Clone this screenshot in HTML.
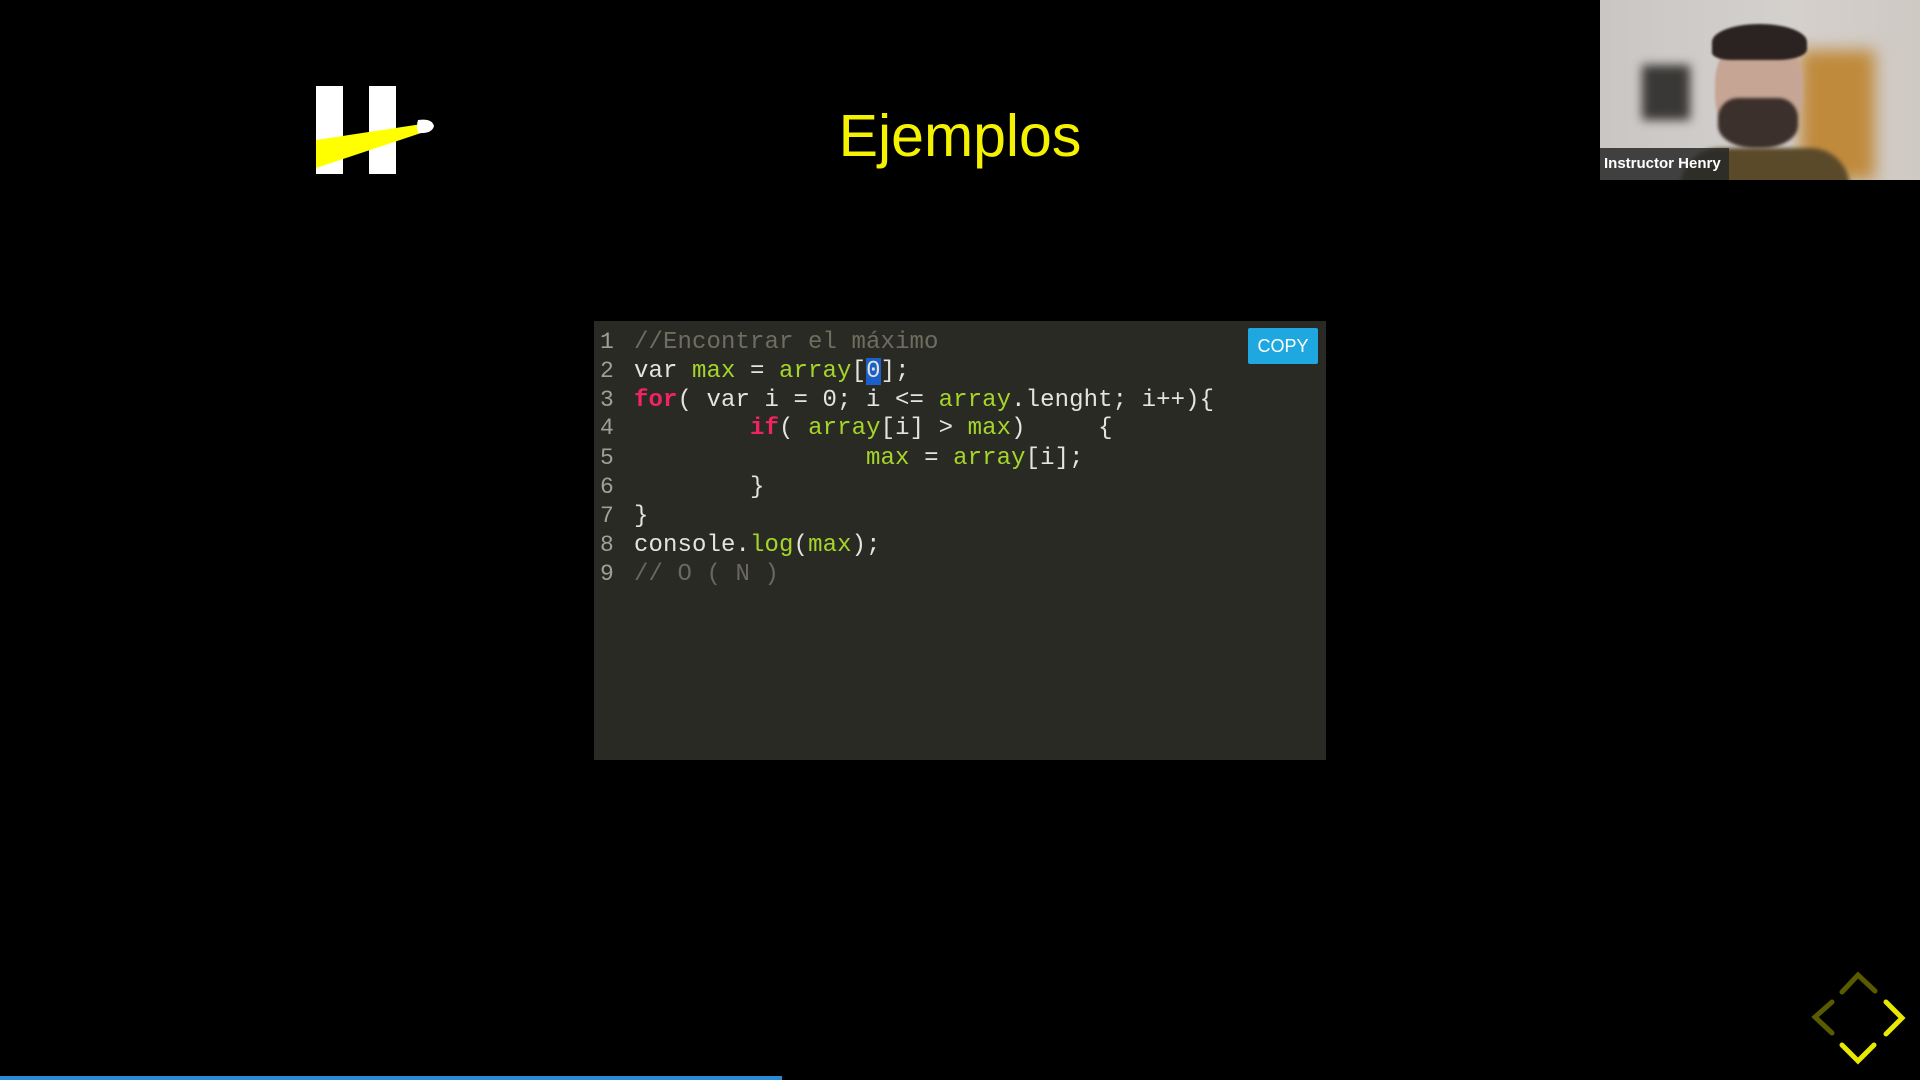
<!DOCTYPE html>
<html><head><meta charset="utf-8"><style>
html,body{margin:0;padding:0;background:#000;width:1920px;height:1080px;overflow:hidden;position:relative;font-family:"Liberation Sans",sans-serif}
.title{position:absolute;left:760px;width:400px;top:96px;text-align:center;color:#f5f200;font-size:59px;line-height:80px}
.code{position:absolute;left:594px;top:321px;width:732px;height:439px;background:#292a24}
.ln{position:absolute;left:6px;color:#a0a09a;font-family:"Liberation Mono",monospace;font-size:23px}
.cl{position:absolute;left:40px;white-space:pre;font-family:"Liberation Mono",monospace;font-size:24px;color:#e4e4de;letter-spacing:0.1px}
.c{color:#6f6d60}.g{color:#a6d52a}.p{color:#f0245f;font-weight:bold}.d{color:#6a685c}
.copy{position:absolute;left:1248px;top:328px;width:70px;height:36px;background:#1fa8df;color:#fff;font-size:18px;line-height:36px;text-align:center;border-radius:2px}
.sel{background:#1b5fc8}
</style></head><body>
<svg style="position:absolute;left:310px;top:80px" width="140" height="100" viewBox="0 0 140 100">
<rect x="6" y="6" width="27" height="88" fill="#fff"/>
<rect x="59" y="6" width="27" height="88" fill="#fff"/>
<path d="M6 60 L112 44 L114 52 L6 88 Z" fill="#ffff00"/>
<path d="M108 40 Q122 38 124 46 Q122 54 108 53 Q106 46 108 40 Z" fill="#fff"/>
</svg>
<div class="title">Ejemplos</div>
<div class="code">
<div style="position:absolute;top:6px;left:0;right:0">
<div class="ln" style="top:2px">1</div><div class="cl c" style="top:2px">//Encontrar el máximo</div>
<div class="ln" style="top:31px">2</div><div class="cl" style="top:31px">var <span class="g">max</span> = <span class="g">array</span>[<span class="sel">0</span>];</div>
<div class="ln" style="top:60px">3</div><div class="cl" style="top:60px"><span class="p">for</span>( var i = 0; i <= <span class="g">array</span>.lenght; i++){</div>
<div class="ln" style="top:88px">4</div><div class="cl" style="top:88px">        <span class="p">if</span>( <span class="g">array</span>[i] > <span class="g">max</span>)     {</div>
<div class="ln" style="top:118px">5</div><div class="cl" style="top:118px">                <span class="g">max</span> = <span class="g">array</span>[i];</div>
<div class="ln" style="top:147px">6</div><div class="cl" style="top:147px">        }</div>
<div class="ln" style="top:176px">7</div><div class="cl" style="top:176px">}</div>
<div class="ln" style="top:205px">8</div><div class="cl" style="top:205px">console.<span class="g">log</span>(<span class="g">max</span>);</div>
<div class="ln" style="top:234px">9</div><div class="cl d" style="top:234px">// O ( N )</div>
</div>
</div>
<div class="copy">COPY</div>
<div style="position:absolute;left:1600px;top:0;width:320px;height:180px;overflow:hidden;background:linear-gradient(90deg,#c9c6c4,#d4d0cd 60%,#cfc9c3)">
<div style="position:absolute;left:42px;top:65px;width:48px;height:55px;background:#3a3836;filter:blur(5px)"></div>
<div style="position:absolute;left:200px;top:50px;width:75px;height:130px;background:#c08a3c;filter:blur(8px)"></div>
<div style="position:absolute;left:80px;top:148px;width:170px;height:40px;border-radius:40px 40px 0 0;background:#5a4a2a;filter:blur(2px)"></div>
<div style="position:absolute;left:115px;top:32px;width:88px;height:115px;border-radius:45% 45% 45% 45%;background:#c7a594;filter:blur(1px)"></div>
<div style="position:absolute;left:112px;top:24px;width:95px;height:36px;border-radius:50% 50% 30% 20%;background:#2a2321;filter:blur(1px)"></div>
<div style="position:absolute;left:118px;top:98px;width:80px;height:50px;border-radius:20px 20px 45% 45%;background:#3b302b;filter:blur(1.5px)"></div>
<div style="position:absolute;left:0;top:148px;width:125px;height:32px;background:rgba(40,40,40,.85);color:#fff;font-size:15px;line-height:32px;padding-left:4px;font-weight:bold">Instructor Henry</div>
</div>
<svg style="position:absolute;left:1800px;top:960px" width="120" height="120" viewBox="1800 960 120 120">
<g fill="none" stroke-width="5" stroke-linecap="round">
<path d="M1842 992 L1858 975 L1875 991" stroke="#5a5a00"/>
<path d="M1832 1002 L1815 1017 L1832 1033" stroke="#5a5a00"/>
<path d="M1886 1002 L1902 1018 L1886 1034" stroke="#e8e800"/>
<path d="M1842 1045 L1858 1061 L1874 1045" stroke="#e8e800"/>
</g></svg>
<div style="position:absolute;left:0;top:1076px;width:782px;height:4px;background:#2a8bd4"></div>
</body></html>
